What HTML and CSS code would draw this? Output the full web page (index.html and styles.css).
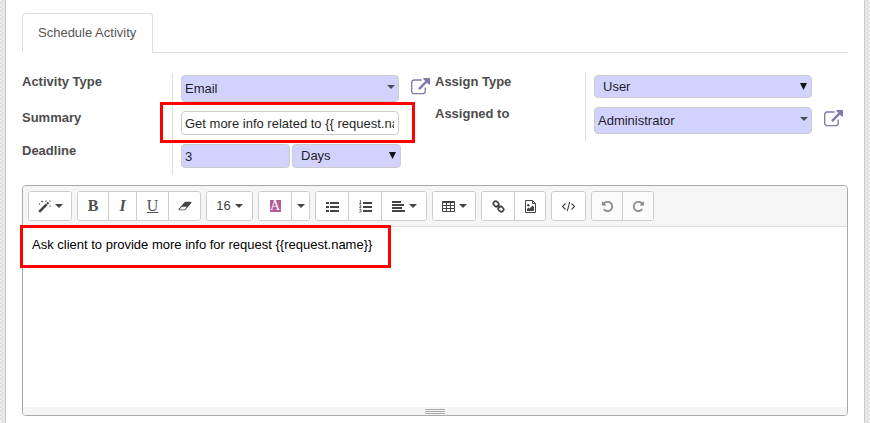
FILE: index.html
```html
<!DOCTYPE html>
<html lang="en">
<head>
<meta charset="utf-8">
<title>Schedule Activity</title>
<link rel="stylesheet" href="styles.css">
</head>
<body>
<svg class="defs" aria-hidden="true">
  <symbol id="external" viewBox="0 0 1792 1792"><path d="M1408 928v320q0 119-84.5 203.5t-203.5 84.5h-832q-119 0-203.5-84.5t-84.5-203.5v-832q0-119 84.5-203.5t203.5-84.5h704q14 0 23 9t9 23v64q0 14-9 23t-23 9h-704q-66 0-113 47t-47 113v832q0 66 47 113t113 47h832q66 0 113-47t47-113v-320q0-14 9-23t23-9h64q14 0 23 9t9 23zm384-864v512q0 26-19 45t-45 19-45-19l-176-176-652 652q-10 10-23 10t-23-10l-114-114q-10-10-10-23t10-23l652-652-176-176q-19-19-19-45t19-45 45-19h512q26 0 45 19t19 45z"/></symbol>
  <symbol id="undo" viewBox="0 0 1792 1792"><path d="M1664 896q0 156-61 298t-164 245-245 164-298 61q-172 0-327-72.500t-264-204.500q-7-10-6.500-22.500t8.500-20.500l137-138q10-9 25-9 16 2 23 12 73 95 179 147t225 52q104 0 198.500-40.500t163.500-109.500 109.500-163.500 40.500-198.500-40.500-198.500-109.500-163.500-163.500-109.500-198.500-40.500q-98 0-188 35.500t-160 101.500l137 138q31 30 14 69-17 40-59 40h-448q-26 0-45-19t-19-45v-448q0-42 40-59 39-17 69 14l130 129q107-101 244.500-156.500t284.500-55.500q156 0 298 61t245 164 164 245 61 298z"/></symbol>
  <symbol id="caret" viewBox="0 0 8 4"><path d="M0 0h8L4 4z"/></symbol>
  <symbol id="arrow" viewBox="0 0 7 7"><path d="M0 0h7L3.500 7z"/></symbol>
</svg>
<main class="sheet">
  <nav class="tabs"><a class="tab" href="#activity">Schedule Activity</a></nav>

  <form class="groups" id="activity">
    <div class="group">
      <div class="row">
        <label for="type">Activity Type</label>
        <div class="cell"><div class="field">
          <input class="control lookup required" id="type" type="text" value="Email">
          <svg class="caret mark"><use href="#caret"/></svg>
          <button class="open" type="button" aria-label="Open activity type"><svg><use href="#external"/></svg></button>
        </div></div>
      </div>
      <div class="row">
        <label for="summary">Summary</label>
        <div class="cell"><div class="field">
          <input class="control plain" id="summary" type="text" value="Get more info related to {{ request.name }}">
          <span class="highlight around-field"></span>
        </div></div>
      </div>
      <div class="row">
        <label for="delay">Deadline</label>
        <div class="cell"><div class="pair">
          <input class="control required" id="delay" type="text" value="3">
          <div class="field">
            <select class="control required" aria-label="Deadline unit"><option>Days</option></select>
            <svg class="arrow mark"><use href="#arrow"/></svg>
          </div>
        </div></div>
      </div>
    </div>
    <div class="group">
      <div class="row">
        <label for="assign">Assign Type</label>
        <div class="cell"><div class="field">
          <select class="control short required" id="assign"><option>User</option></select>
          <svg class="arrow mark"><use href="#arrow"/></svg>
        </div></div>
      </div>
      <div class="row">
        <label for="user">Assigned to</label>
        <div class="cell"><div class="field">
          <input class="control lookup required" id="user" type="text" value="Administrator">
          <svg class="caret mark"><use href="#caret"/></svg>
          <button class="open" type="button" aria-label="Open user"><svg><use href="#external"/></svg></button>
        </div></div>
      </div>
    </div>
  </form>

  <section class="editor">
    <div class="toolbar">
      <div class="buttons">
        <button class="w42" aria-label="Style"><svg class="icon" viewBox="0 0 13 13"><path d="M1.200 11.800L8.600 4.400" stroke="currentColor" stroke-width="2.600"/><path d="M9 4L10.500 2.500" stroke="currentColor" stroke-width="2.300"/><path d="M4 0l.4 1.200 1.200.4-1.200.4L4 3.200l-.4-1.200-1.200-.4 1.200-.4zM8 0l.3.800.8.300-.8.300L8 2.200l-.3-.8-.8-.3.800-.3zM1.500 3l.3.800.8.300-.8.300-.3.800-.3-.8-.8-.3.800-.3zM12 0l.3.800.7.300-.7.300-.3.700-.3-.7-.7-.3.700-.3zM12 5l.3.800.7.300-.7.300-.3.800-.3-.8-.7-.3.700-.3z"/></svg><svg class="caret"><use href="#caret"/></svg></button>
      </div>
      <div class="buttons">
        <button class="w30 glyph bold">B</button>
        <button class="w28 glyph italic">I</button>
        <button class="w32 glyph under">U</button>
        <button class="w32" aria-label="Remove formatting"><svg class="eraser" viewBox="0 0 2048 1792"><path d="M960 1408l336-384h-768l-336 384h768zm1013-1077q15 34 9.500 71.500t-30.500 65.500l-896 1024q-38 44-96 44h-768q-38 0-69.500-20.500t-47.500-54.500q-15-34-9.500-71.500t30.500-65.500l896-1024q38-44 96-44h768q38 0 69.500 20.500t47.500 54.500z"/></svg></button>
      </div>
      <div class="buttons">
        <button class="w45">16<svg class="caret"><use href="#caret"/></svg></button>
      </div>
      <div class="buttons">
        <button class="w32" aria-label="Text color"><span class="swatch">A</span></button>
        <button class="w18" aria-label="More colors"><svg class="caret"><use href="#caret"/></svg></button>
      </div>
      <div class="buttons">
        <button class="w32" aria-label="Bulleted list"><svg class="icon" viewBox="0 0 13 13"><path d="M0 2h3v2H0zM0 6h3v2H0zM0 10h3v2H0zM4 2h9v2H4zM4 6h9v2H4zM4 10h9v2H4z"/></svg></button>
        <button class="w33" aria-label="Numbered list"><svg class="icon" viewBox="0 0 13 13"><path d="M4 2h9v2H4zM4 6h9v2H4zM4 10h9v2H4z"/><path d="M.5 1l1-.5v3M.3 3.500h2M.4 5h1.400v1L.5 7.500h1.800M.4 9.300h1.700L1.200 10.500q1 0 1 1t-2 .8" fill="none" stroke="currentColor" stroke-width=".8"/></svg></button>
        <button class="w45" aria-label="Align"><svg class="icon" viewBox="0 0 13 13"><path d="M0 1h9v2H0zM0 4h12v2H0zM0 7h10v2H0zM0 10h13v2H0z"/></svg><svg class="caret"><use href="#caret"/></svg></button>
      </div>
      <div class="buttons">
        <button class="w42" aria-label="Table"><svg class="icon" viewBox="0 0 13 13"><path fill-rule="evenodd" d="M2 1h10q1 0 1 1v9q0 1-1 1H1q-1 0-1-1V2q0-1 1-1zM1 3v2h3V3zm4 0v2h3V3zm4 0v2h3V3zM1 6v2h3V6zm4 0v2h3V6zm4 0v2h3V6zM1 9v2h3V9zm4 0v2h3V9zm4 0v2h3V9z"/></svg><svg class="caret"><use href="#caret"/></svg></button>
      </div>
      <div class="buttons">
        <button class="w32" aria-label="Link"><svg class="icon" viewBox="0 0 13 13"><g fill="none" stroke="currentColor" stroke-width="1.700"><rect x="1.200" y="1.700" width="5.600" height="4.400" rx="2" transform="rotate(45 4 4)"/><rect x="6.200" y="6.900" width="5.600" height="4.400" rx="2" transform="rotate(45 9 9)"/><path d="M5 5l3 3"/></g></svg></button>
        <button class="w31" aria-label="Picture"><svg class="icon" viewBox="0 0 13 13"><path d="M1.500.5h7l3 3v9h-10zM8.500.5v3h3" fill="none" stroke="currentColor"/><circle cx="4.300" cy="5.300" r="1.200"/><path d="M3 11V9l1.500-1.500L5.500 8.500l3-3L10 7v4z"/></svg></button>
      </div>
      <div class="buttons">
        <button class="w33" aria-label="Code view"><svg class="icon" viewBox="0 0 13 13"><path d="M3.500 3.500l-3 3 3 3M9.500 3.500l3 3-3 3M7.700 1.800l-2.400 9.400" fill="none" stroke="currentColor" stroke-width="1.100"/></svg></button>
      </div>
      <div class="buttons">
        <button class="w30" disabled aria-label="Undo"><svg class="icon"><use href="#undo"/></svg></button>
        <button class="w31" disabled aria-label="Redo"><svg class="icon flip"><use href="#undo"/></svg></button>
      </div>
    </div>
    <div class="body" contenteditable="true" spellcheck="false">Ask client to provide more info for request {{request.name}}</div>
    <div class="status"><span class="grip"></span></div>
    <span class="highlight around-text"></span>
  </section>
</main>
</body>
</html>
```
FILE: styles.css
```css
* { box-sizing: border-box; }

body {
  margin: 0;
  overflow: hidden;
  background: repeating-conic-gradient(#dedede 0 25%, #efefef 0 50%) 0 0 / 4px 4px;
  color: #4c4c4c;
  font: 13px/18px "Liberation Sans", Arial, sans-serif;
}

svg { display: block; fill: currentColor; }
.defs { position: absolute; width: 0; height: 0; }

.sheet {
  min-height: 100vh;
  margin: 0 5px;
  padding: 13px 16px 7px;
  background: #fff;
  border: solid #c8c8d3;
  border-width: 0 1px;
}

.tabs { display: flex; border-bottom: 1px solid #ddd; }
.tab {
  margin-bottom: -1px;
  padding: 10px 16px 10px 15px;
  border: 1px solid #ddd;
  border-bottom-color: #fff;
  border-radius: 4px 4px 0 0;
  background: #fff;
  color: #555;
  text-decoration: none;
}

.groups {
  display: grid;
  grid-template-columns: 1fr 1fr;
  align-items: start;
  margin: 20px 0 10px;
}
.row { display: grid; grid-template-columns: 150px 1fr; }
.row label { font-weight: bold; }
.cell { padding: 2px 36px 7px 8px; border-left: 1px solid #ddd; }
.field { position: relative; }
.pair { display: grid; grid-template-columns: 1fr 1fr; gap: 2px; margin-right: -2px; }

.control {
  display: block;
  width: 100%;
  height: 24px;
  padding: 0 4px 0 3px;
  border: 1px solid #ccc;
  border-radius: 4px;
  background: #fff;
  color: #1f1f1f;
  font: inherit;
  appearance: none;
}
.required { background: #d2d2ff; }
.lookup { height: 27px; }
.short { height: 23px; }
select.control { padding: 0 8px; }

.caret { width: 8px; height: 4px; }
.arrow { width: 7px; height: 7px; color: #111; }
.mark { position: absolute; top: 8px; right: 5px; pointer-events: none; }
.caret.mark { top: 10px; right: 4px; }

.open {
  position: absolute;
  top: 3px;
  right: -31px;
  padding: 0;
  border: 0;
  background: none;
  color: #7c7bad;
}
.open svg { width: 19px; height: 19px; }

.highlight { position: absolute; border: 3px solid #f00; pointer-events: none; }
.around-field { inset: -9px -16px -8px -21px; }
.around-text { top: 39px; left: -3px; width: 371px; height: 43px; }

.editor {
  position: relative;
  border: 1px solid #a9a9a9;
  border-radius: 4px;
}
.toolbar {
  display: flex;
  flex-wrap: wrap;
  gap: 5px;
  padding: 5px;
  border-bottom: 1px solid #ddd;
  border-radius: 3px 3px 0 0;
  background: #f5f5f5;
}
.buttons {
  display: flex;
  overflow: hidden;
  border: 1px solid #ccc;
  border-radius: 3px;
  background: #fff;
}
.buttons button {
  display: flex;
  align-items: center;
  justify-content: center;
  gap: 4px;
  height: 28px;
  padding: 0;
  border: 0;
  background: #fff;
  color: #444;
  font: 13px/18px "Liberation Sans", Arial, sans-serif;
}
.buttons button + button { border-left: 1px solid #ccc; }
.buttons button:disabled { background: #fbfbfb; color: #8f8f8f; }
.w18 { width: 18px; }
.w28 { width: 28px; }
.w30 { width: 30px; }
.w31 { width: 31px; }
.w32 { width: 32px; }
.w33 { width: 33px; }
.w42 { width: 42px; }
.w45 { width: 45px; }
.icon { width: 13px; height: 13px; }
.eraser { width: 14px; height: 12px; }
.flip { transform: scaleX(-1); }
.buttons .glyph { color: #505050; font: 16px/18px "Liberation Serif", serif; }
.buttons .bold { font-weight: bold; }
.buttons .italic { font-style: italic; font-weight: bold; }
.buttons .under { text-decoration: underline; }
.swatch {
  width: 11px;
  background: #b35e9b;
  color: #fff;
  font: 14px/12px "Liberation Serif", serif;
}

.body {
  height: 180px;
  padding: 9px;
  outline: 0;
  color: #000;
}
.status {
  display: flex;
  justify-content: center;
  height: 8px;
  padding-top: 2px;
  border-radius: 0 0 3px 3px;
  background: #f5f5f5;
}
.grip {
  width: 20px;
  height: 5px;
  background: repeating-linear-gradient(#a9a9a9 0 1px, transparent 1px 2px);
}
```
